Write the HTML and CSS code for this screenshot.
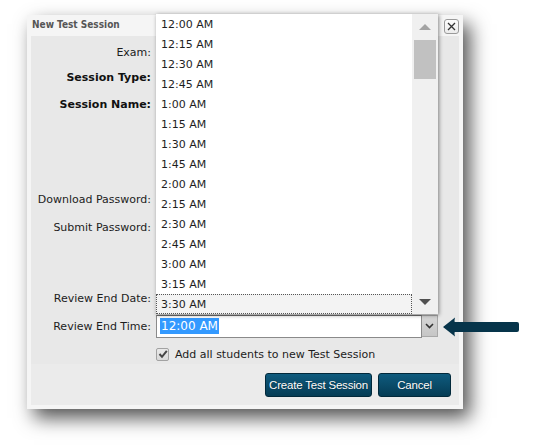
FILE: index.html
```html
<!DOCTYPE html>
<html>
<head>
<meta charset="utf-8">
<title>New Test Session</title>
<link rel="stylesheet" href="styles.css">
</head>
<body>
<div class="page">
  <div class="dialog">
    <div class="titlebar">
      <span class="title">New Test Session</span>
      <span class="close">
        <svg width="9" height="9" viewBox="0 0 9 9"><path d="M1 1 L8 8 M8 1 L1 8" stroke="#333" stroke-width="1.3" fill="none"/></svg>
      </span>
    </div>
    <div class="panel">
      <div class="form">
        <div class="row h26"><div class="label">Exam:</div><div class="field"></div></div>
        <div class="row h24"><div class="label bold">Session Type:</div><div class="field"></div></div>
        <div class="row h30"><div class="label bold">Session Name:</div><div class="field"></div></div>
        <div class="spacer s66"></div>
        <div class="row h28"><div class="label">Download Password:</div><div class="field"></div></div>
        <div class="row h28"><div class="label">Submit Password:</div><div class="field"></div></div>
        <div class="spacer s44"></div>
        <div class="row h28"><div class="label">Review End Date:</div><div class="field"></div></div>
        <div class="row h28">
          <div class="label">Review End Time:</div>
          <div class="field">
            <div class="combo">
              <div class="combo-input"><span class="sel">12:00 AM</span></div>
              <div class="combo-btn">
                <svg width="9" height="6" viewBox="0 0 9 6"><path d="M1 1 L4.5 4.5 L8 1" stroke="#333" stroke-width="1.6" fill="none"/></svg>
              </div>
            </div>
          </div>
        </div>
        <div class="row h24 checkrow">
          <div class="label"></div>
          <div class="field">
            <label class="check">
              <span class="box"><svg width="10" height="10" viewBox="0 0 10 10"><path d="M1.5 5 L4 7.8 L8.8 1.8" stroke="#444" stroke-width="2" fill="none"/></svg></span>
              <span>Add all students to new Test Session</span>
            </label>
          </div>
        </div>
      </div>
      <div class="actions">
        <button class="btn">Create Test Session</button>
        <button class="btn">Cancel</button>
      </div>
    </div>

    <div class="listbox">
      <ul class="options">
        <li>12:00 AM</li>
        <li>12:15 AM</li>
        <li>12:30 AM</li>
        <li>12:45 AM</li>
        <li>1:00 AM</li>
        <li>1:15 AM</li>
        <li>1:30 AM</li>
        <li>1:45 AM</li>
        <li>2:00 AM</li>
        <li>2:15 AM</li>
        <li>2:30 AM</li>
        <li>2:45 AM</li>
        <li>3:00 AM</li>
        <li>3:15 AM</li>
        <li class="focus">3:30 AM</li>
      </ul>
      <div class="scrollbar">
        <div class="sb-btn"><span class="tri-up"></span></div>
        <div class="thumb"></div>
        <div class="track"></div>
        <div class="sb-btn"><span class="tri-down"></span></div>
      </div>
    </div>
  </div>

  <svg class="pointer" width="80" height="22" viewBox="0 0 80 22">
    <path d="M1 11 L13 1.5 Q12 6 13 6 L75 6 Q77 6 77 8 L77 14 Q77 16 75 16 L13 16 Q12 16 13 20.5 Z" fill="#06344a"/>
  </svg>
</div>
</body>
</html>
```

FILE: styles.css
```css
html, body {
  margin: 0;
  padding: 0;
  background: #ffffff;
}

.page {
  position: relative;
  width: 535px;
  height: 445px;
  overflow: hidden;
  padding-top: 15px;
  box-sizing: border-box;
  font-family: "DejaVu Sans", Verdana, sans-serif;
  font-size: 11px;
  color: #1c1c1c;
}

.dialog {
  position: relative;
  margin-left: 27px;
  width: 436px;
  height: 394px;
  box-sizing: border-box;
  padding: 0 4px 4px 4px;
  background: #f5f5f5;
  box-shadow: 7px 9px 18px rgba(0, 0, 0, 0.68);
  display: flex;
  flex-direction: column;
}

.titlebar {
  height: 21px;
  display: flex;
  align-items: center;
  justify-content: space-between;
  padding-left: 1px;
}

.title {
  font-family: "DejaVu Sans Condensed", "DejaVu Sans", sans-serif;
  font-stretch: condensed;
  font-weight: bold;
  font-size: 10px;
  color: #555555;
  margin-top: -2px;
}

.close {
  width: 13px;
  height: 13px;
  border: 1px solid #9a9a9a;
  border-radius: 3px;
  background: linear-gradient(#fdfdfd, #ececec);
  display: flex;
  align-items: center;
  justify-content: center;
  margin-top: 2px;
}

.panel {
  flex: 1;
  display: flex;
  flex-direction: column;
}

.form {
  background: #e8e8e8;
  padding-top: 3px;
  height: 328px;
  box-sizing: border-box;
}

.row {
  display: grid;
  grid-template-columns: 120px 1fr;
  column-gap: 5px;
  align-items: center;
}

.h24 { height: 24px; }
.h26 { height: 26px; }
.h28 { height: 28px; }
.h30 { height: 30px; }
.s66 { height: 66px; }
.s44 { height: 43px; }

.label {
  text-align: right;
  white-space: nowrap;
  color: #1c1c1c;
}

.label.bold {
  font-weight: bold;
  color: #111;
}

.combo {
  display: flex;
  align-items: flex-start;
}

.combo-input {
  width: 266px;
  height: 23px;
  box-sizing: border-box;
  border: 1px solid #8a8a8a;
  border-top-color: #6e6e6e;
  background: #ffffff;
  display: flex;
  align-items: center;
  padding-left: 3px;
}

.sel {
  background: #3399ff;
  color: #ffffff;
  font-size: 12px;
  line-height: 16px;
  padding: 0 1px;
}

.combo-btn {
  width: 16px;
  height: 22px;
  box-sizing: border-box;
  border: 1px solid #a8a8a8;
  border-left: none;
  background: linear-gradient(#d6d6d6, #c6c6c6);
  display: flex;
  align-items: center;
  justify-content: center;
}

.checkrow {
  align-items: end;
}

.check {
  display: flex;
  align-items: center;
  gap: 6px;
  height: 20px;
}

.box {
  width: 11px;
  height: 11px;
  border: 1px solid #a2a2a2;
  border-radius: 2px;
  background: linear-gradient(#e9e9e9, #d9d9d9);
  display: flex;
  align-items: center;
  justify-content: center;
}

.actions {
  flex: 1;
  background: #ebebeb;
  display: flex;
  justify-content: flex-end;
  align-items: center;
  gap: 6px;
  padding-right: 8px;
  padding-top: 1px;
}

.btn {
  height: 24px;
  margin: 0;
  padding: 0;
  border: 1px solid #02293b;
  border-radius: 3px;
  background: linear-gradient(#0f5b7e, #053c55);
  color: #ffffff;
  font-family: "Liberation Sans", Arial, sans-serif;
  font-size: 11.5px;
  letter-spacing: -0.2px;
  text-shadow: 0 0 1px rgba(0, 0, 0, 0.5);
}

.btn:first-child { width: 107px; }
.btn:last-child { width: 73px; }

.listbox {
  position: absolute;
  left: 129px;
  top: -1px;
  width: 282px;
  height: 300px;
  display: flex;
  background: #ffffff;
  box-shadow: 1px 1px 4px rgba(0, 0, 0, 0.45);
}

.options {
  list-style: none;
  margin: 0;
  padding: 0;
  width: 256px;
}

.options li {
  height: 20px;
  line-height: 18px;
  padding-top: 2px;
  padding-left: 5px;
  box-sizing: border-box;
  color: #1e1e1e;
}

.options li.focus {
  border: 1px dotted #555;
  line-height: 18px;
  padding-top: 1px;
  padding-left: 4px;
  background: #f3f3f3;
}

.scrollbar {
  width: 26px;
  background: #f0f0f0;
  display: flex;
  flex-direction: column;
  align-items: center;
}

.sb-btn {
  height: 26px;
  width: 26px;
  display: flex;
  align-items: center;
  justify-content: center;
}

.tri-up {
  width: 0;
  height: 0;
  border-left: 6px solid transparent;
  border-right: 6px solid transparent;
  border-bottom: 6px solid #a3a3a3;
}

.tri-down {
  width: 0;
  height: 0;
  border-left: 6px solid transparent;
  border-right: 6px solid transparent;
  border-top: 6px solid #505050;
  margin-top: 2px;
}

.thumb {
  width: 22px;
  height: 39px;
  background: #c1c1c1;
}

.track {
  flex: 1;
}

.pointer {
  position: absolute;
  left: 442px;
  top: 316px;
}
```
